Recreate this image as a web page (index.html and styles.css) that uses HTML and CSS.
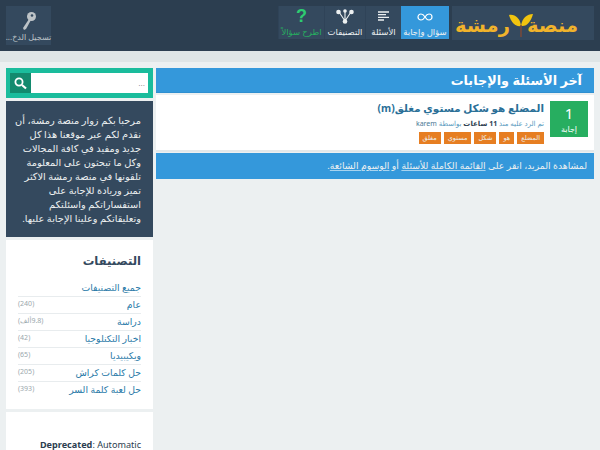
FILE: index.html
```html
<!DOCTYPE html>
<html lang="ar" dir="rtl">
<head>
<meta charset="utf-8">
<title>منصة رمشة</title>
<link rel="stylesheet" href="styles.css">
</head>
<body>
<header class="top">
  <div class="logo"><span>منصة</span><svg class="leaf" width="24" height="24" viewBox="0 0 24 24"><path d="M0 2C6 1 11 5 12 13C6 14 2 9 0 2Z" fill="#f1c40f"/><path d="M24 1C18 1 13 5 12 13C18 14 22 8 24 1Z" fill="#f1c40f"/><path d="M12 12V24" stroke="#7a4a3a" stroke-width="1.500"/></svg><span>رمشة</span></div>
  <nav class="nav">
    <a class="item active q">
      <svg width="16" height="8" viewBox="0 0 16 8"><path d="M8 4C6.500 1.500 5.500 1 4 1A3 3 0 0 0 4 7C5.500 7 6.500 6.500 8 4C9.500 1.500 10.500 1 12 1A3 3 0 0 1 12 7C10.500 7 9.500 6.500 8 4Z" fill="none" stroke="#fff" stroke-width="1.200"/></svg>
      <span>سؤال وإجابة</span></a>
    <a class="item qs">
      <svg width="11" height="10" viewBox="0 0 11 10"><path d="M0 1H11M0 3.700H8M0 6.400H11M0 9H6" stroke="#ecf0f1" stroke-width="1.300"/></svg>
      <span>الأسئلة</span></a>
    <a class="item cat">
      <svg width="18" height="15" viewBox="0 0 18 15"><path d="M9 12L3 3M9 12V2M9 12L15 3" stroke="#ecf0f1" stroke-width="1.100"/><circle cx="2.500" cy="3" r="2.300" fill="#ecf0f1"/><circle cx="9" cy="2" r="1.800" fill="#ecf0f1"/><circle cx="15.500" cy="3" r="2.300" fill="#ecf0f1"/><circle cx="9" cy="12.500" r="2.300" fill="#ecf0f1"/></svg>
      <span>التصنيفات</span></a>
    <a class="item ask"><b>?</b><span>اطرح سؤالاً</span></a>
  </nav>
  <a class="login">
    <svg width="16" height="20" viewBox="0 0 16 20"><circle cx="10.500" cy="5.500" r="4.500" fill="#bdc3c7"/><circle cx="11" cy="4.500" r="1.300" fill="#34495e"/><path d="M8 8L2 17L3 19L5 18L10 9Z" fill="#bdc3c7"/></svg>
    <span>تسجيل الدخ...</span>
  </a>
</header>
<div class="band"></div>
<div class="layout">
  <main class="main">
    <h1 class="title">آخر الأسئلة والإجابات</h1>
    <article class="question">
      <div class="count"><strong>1</strong><span>إجابة</span></div>
      <div class="qbody">
        <h2>المضلع هو شكل مستوي مغلق(m)</h2>
        <p class="meta">تم الرد عليه منذ <b>11 ساعات</b> بواسطة <a>karem</a></p>
        <ul class="tags"><li>المضلع</li><li>هو</li><li>شكل</li><li>مستوي</li><li>مغلق</li></ul>
      </div>
    </article>
    <p class="more">لمشاهدة المزيد، انقر على <u>القائمة الكاملة للأسئلة</u> أو <u>الوسوم الشائعة</u>.</p>
  </main>
  <aside class="side">
    <form class="search">
      <input class="field" placeholder="...">
      <span class="sbtn"><svg width="13" height="13" viewBox="0 0 13 13"><circle cx="5" cy="5" r="3.600" fill="none" stroke="#fff" stroke-width="1.800"/><path d="M8 8L12 11.500" stroke="#fff" stroke-width="2.200"/></svg></span>
    </form>
    <div class="welcome">مرحبا بكم زوار منصة رمشة، أن نقدم لكم عبر موقعنا هذا كل جديد ومفيد في كافة المجالات وكل ما تبحثون على المعلومة تلقونها في منصة رمشة الاكثر تميز وريادة للإجابة على استفساراتكم واسئلتكم وتعليقاتكم وعلينا الإجابة عليها.</div>
    <section class="cats">
      <h3>التصنيفات</h3>
      <ul class="catlist">
        <li><a>جميع التصنيفات</a></li>
        <li><a>عام</a><span>(240)</span></li>
        <li><a>دراسة</a><span>(9.8ألف)</span></li>
        <li><a>اخبار التكنلوجيا</a><span>(42)</span></li>
        <li><a>ويكيبيديا</a><span>(65)</span></li>
        <li><a>حل كلمات كراش</a><span>(205)</span></li>
        <li><a>حل لعبة كلمة السر</a><span>(393)</span></li>
      </ul>
    </section>
    <section class="notice" dir="ltr"><p><b>Deprecated</b>: Automatic</p></section>
  </aside>
</div>
</body>
</html>
```
FILE: styles.css
```css
html,body{margin:0;padding:0;height:450px;overflow:hidden}
body{background:#ecf0f1;font-family:"Noto Sans","DejaVu Sans",sans-serif;color:#2c3e50;font-size:10px}
.top{height:51px;background:#2c3e50;display:flex;box-sizing:border-box;padding:6px;align-items:flex-start}
.logo{width:142px;height:34px;box-sizing:border-box;padding:3px 16px 0 0;background:#34495e;display:flex;align-items:center;color:#f1b32b;font-size:19.500px;font-weight:bold;line-height:30px;margin-left:3px}
.leaf{margin:0 -6px 0 -1px;flex:none}
.nav{display:flex;height:33px}
.item{display:flex;flex-direction:column;align-items:center;justify-content:space-between;box-sizing:border-box;padding:5px 0 2px;height:33px;background:#34495e;color:#ecf0f1;font-size:8.500px;line-height:11px;white-space:nowrap;border-left:1px solid #2f4358}
.item svg{display:block;flex:none}
.q{width:48px;background:#3498db;border-left:0;padding-top:7px}
.qs{width:36px}
.cat{width:41px;padding-top:3px}
.ask{width:46px;padding-top:3px}
.ask b{font-size:18px;line-height:15px;font-family:"Liberation Sans",sans-serif;color:#2ecc71}
.ask span{color:#27ae60}
.login{margin-right:auto;width:45px;height:39px;background:#34495e;display:flex;flex-direction:column;align-items:center;justify-content:space-between;box-sizing:border-box;padding:5px 0 3px;color:#bdc3c7;font-size:8px;line-height:10px;white-space:nowrap}
.band{height:11px;background:#dfe5e6}
.layout{display:flex;padding:6px;gap:3px;align-items:flex-start}
.main{width:438px;flex:none}
.title{margin:0;height:25px;line-height:24px;background:#3498db;border-bottom:1px solid #2f8fd0;box-sizing:border-box;color:#fff;font-size:12.800px;font-weight:bold;padding:0 12px}
.question{background:#fff;height:57px;box-sizing:border-box;padding:6px 6px 0;display:flex;gap:6px;border-bottom:2px solid #e3e8ea;margin-top:2px}
.count{width:38px;height:36px;background:#27ae60;color:#fff;display:flex;flex-direction:column;align-items:center;flex:none}
.count strong{font-weight:normal;font-size:15px;line-height:20px;margin-top:2px}
.count span{font-size:8px;line-height:11px}
.qbody{flex:1}
.qbody h2{margin:0;font-size:10.400px;font-weight:bold;line-height:15px;color:#2a6f97}
.meta{margin:3px 0 0;font-size:7px;line-height:10px;color:#5a9bc0}
.meta b{color:#2c3e50}
.meta a{color:#4b7a96}
.tags{list-style:none;margin:3px 0 0;padding:0;display:flex;gap:3px}
.tags li{background:#e67e22;color:#ecf0f1;font-size:6.500px;line-height:12px;padding:0 4px;height:12px}
.more{margin:1px 0 0;height:26px;line-height:25px;background:#3498db;color:#ecf0f1;font-size:9.300px;padding:0 7px}
.more u{text-decoration-color:#a8d3ef}
.side{width:147px;flex:none;display:flex;flex-direction:column}
.search{height:30px;box-sizing:border-box;background:#1abc9c;padding:5px 5px 5px 4px;display:flex}
.field{flex:1;min-width:0;border:0;padding:0 3px;margin:0;background:#fff;font-size:8px;height:20px;outline:0}
.sbtn{width:21px;height:20px;background:#138a6e;display:flex;align-items:center;justify-content:center;flex:none}
.welcome{margin-top:3px;height:136px;box-sizing:border-box;background:#34495e;color:#ecf0f1;font-size:9.800px;line-height:14px;padding:13px 12px 0 6px}
.cats{background:#fff;height:169px;box-sizing:border-box;padding:13px 12px 0;margin-top:3px}
.cats h3{margin:0 0 11px;font-size:11.600px;line-height:16px;font-weight:bold;color:#34495e}
.catlist{list-style:none;margin:0;padding:0}
.catlist li{height:17px;box-sizing:border-box;border-bottom:1px solid #e8ecee;display:flex;justify-content:space-between;align-items:flex-start;line-height:15px}
.catlist li:last-child{border-bottom:0}
.catlist a{color:#2a7aa8;font-size:9.300px}
.catlist span{color:#9aa8ad;font-size:7px;line-height:13px}
.notice{margin-top:3px;background:#fff;height:60px;box-sizing:border-box;padding:26px 12px 0;text-align:right;font-size:9.100px;color:#2c3e50}
.notice p{margin:0}
```
